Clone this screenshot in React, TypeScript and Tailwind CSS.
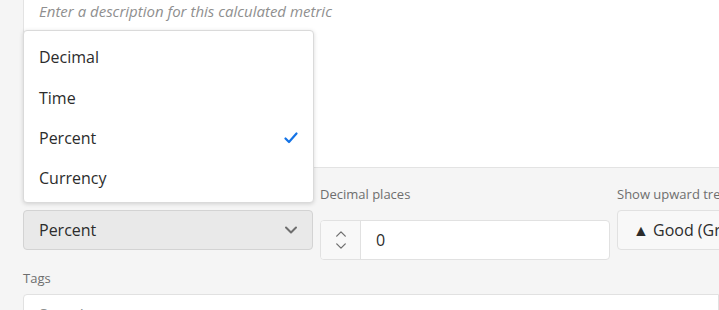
import React from "react";

const font = { fontFamily: '"Open Sans", "Noto Sans", sans-serif' };

function Check() {
  return (
    <svg width="14" height="14" viewBox="0 0 14 14" className="text-[#1473e6]">
      <path d="M1.5 7.5 L5 11 L12.5 2.5" fill="none" stroke="currentColor" strokeWidth="2.2" strokeLinecap="round" strokeLinejoin="round" />
    </svg>
  );
}

function ChevronDown({ size = 14, stroke = 2 }: { size?: number; stroke?: number }) {
  return (
    <svg width={size} height={size} viewBox="0 0 14 14" className="text-[#6e6e6e]">
      <path d="M2 4.5 L7 9.5 L12 4.5" fill="none" stroke="currentColor" strokeWidth={stroke} strokeLinecap="round" strokeLinejoin="round" />
    </svg>
  );
}

function ChevronUp({ size = 14, stroke = 2 }: { size?: number; stroke?: number }) {
  return (
    <svg width={size} height={size} viewBox="0 0 14 14" className="text-[#6e6e6e]">
      <path d="M2 9.5 L7 4.5 L12 9.5" fill="none" stroke="currentColor" strokeWidth={stroke} strokeLinecap="round" strokeLinejoin="round" />
    </svg>
  );
}

const options = ["Decimal", "Time", "Percent", "Currency"];

export default function App() {
  return (
    <div style={font} className="relative h-[310px] w-[719px] overflow-hidden bg-[#f5f5f5] pl-[23px]">
      {/* Description textarea */}
      <div className="h-[168px] border-b border-l border-[#e3e3e3] bg-white pl-[15px]">
        <p className="text-[15px] italic text-[#8f8f8f]">
          Enter a description for this calculated metric
        </p>
      </div>

      {/* Fields row */}
      <div className="mt-[17px] flex gap-[7px]">
        <div className="w-[290px] shrink-0">
          {/* label hidden under the open menu */}
          <div className="h-[25px]" />
          <button className="flex h-[40px] w-full items-center justify-between rounded-[4px] border border-[#d3d3d3] bg-[#e9e9e9] pl-[15px] pr-[14px] text-[16px] text-[#2c2c2c]">
            Percent
            <ChevronDown />
          </button>
        </div>
        <div className="w-[290px] shrink-0">
          <div className="h-[35px] text-[13px] text-[#6e6e6e]">Decimal places</div>
          <div className="flex h-[40px] w-full overflow-hidden rounded-[4px] border border-[#e1e1e1] bg-white">
            <div className="flex w-[40px] flex-col items-center justify-center border-r border-[#e1e1e1] bg-[#f8f8f8]">
              <ChevronUp size={12} stroke={1.5} />
              <ChevronDown size={12} stroke={1.5} />
            </div>
            <div className="flex items-center pl-[15px] text-[16px] text-[#2c2c2c]">0</div>
          </div>
        </div>
        <div className="w-[200px] shrink-0">
          <div className="h-[25px] whitespace-nowrap text-[13px] text-[#6e6e6e]">Show upward trend as</div>
          <button className="flex h-[40px] w-full items-center rounded-l-[4px] border border-[#e1e1e1] bg-[#f8f8f8] pl-[15px] text-[16px] whitespace-nowrap text-[#2c2c2c]">
            ▲ Good (Green)
          </button>
        </div>
      </div>

      {/* Tags */}
      <div className="mt-[9px] text-[13px] text-[#6e6e6e]">Tags</div>
      <div className="mt-[5px] h-[40px] rounded-l-[4px] border border-[#e1e1e1] bg-white pl-[15px] pt-[8px] text-[16px] text-[#8f8f8f]">
        Search tags
      </div>

      {/* Open menu */}
      <div className="absolute left-[23px] top-[30px] w-[291px] rounded-[4px] border border-[#dadada] bg-white pb-[3px] pt-[6px] shadow-[0_1px_4px_rgba(0,0,0,0.15)]">
        {options.map((o) => (
          <div key={o} className="flex h-[40.4px] items-center justify-between pl-[15px] pr-[15px] text-[16px] text-[#2c2c2c]">
            {o}
            {o === "Percent" && <Check />}
          </div>
        ))}
      </div>
    </div>
  );
}
